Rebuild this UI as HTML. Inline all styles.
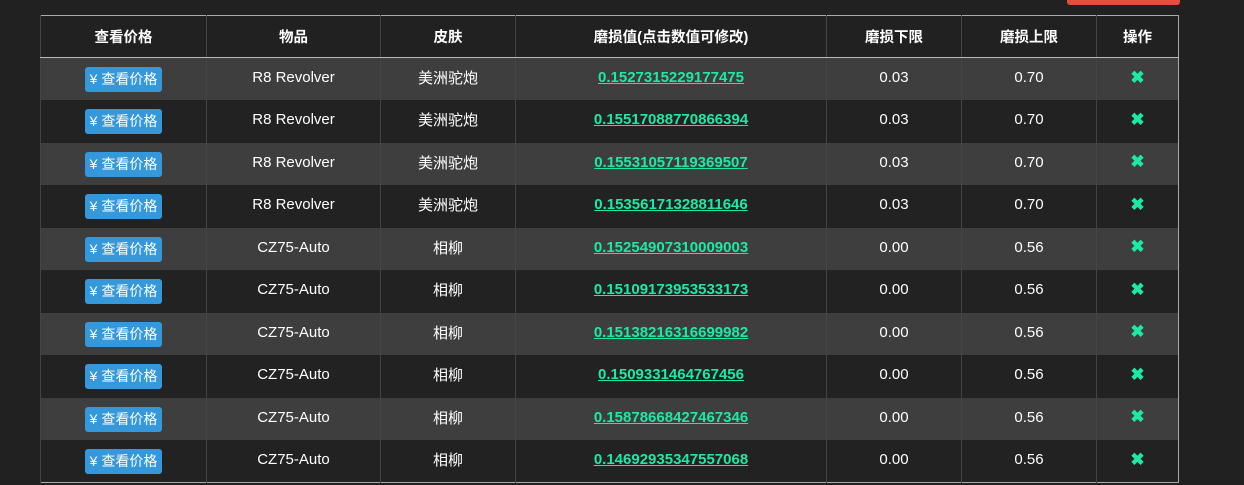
<!DOCTYPE html>
<html><head><meta charset="utf-8"><style>
html,body{margin:0;padding:0;background:#212121;width:1244px;height:485px;overflow:hidden;font-family:"Liberation Sans","Noto Sans CJK SC",sans-serif;color:#fff;}
.red{position:absolute;left:1067px;top:-4px;width:113px;height:9px;background:#e74c3c;border-radius:3px;}
table{position:absolute;left:40px;top:15px;border-collapse:collapse;border:1px solid #aaa;table-layout:fixed;width:1139px;}
td,th{border-left:1px solid #444;text-align:center;font-size:15px;padding:0;}
th{height:41px;font-weight:bold;border-bottom:1px solid #bbb;background:#212121;font-size:14.5px;}
td{height:42.5px;padding-bottom:3px;box-sizing:border-box;}
tr.o td{background:#3e3e3e;}
tr.e td{background:#222;}
.btn{display:inline-block;background:#3498db;color:#fff;border-radius:3px;width:77px;height:25px;line-height:25px;font-size:14px;position:relative;top:2px;}
a{color:#1de9a6;font-weight:bold;text-decoration:underline;font-size:15px;}
.x{color:#1de9a6;font-weight:bold;font-size:17px;}
</style></head><body>
<div class="red"></div>
<table>
<colgroup><col style="width:166px"><col style="width:174px"><col style="width:135px"><col style="width:311px"><col style="width:135px"><col style="width:135px"><col style="width:82px"></colgroup>
<tr><th>查看价格</th><th>物品</th><th>皮肤</th><th>磨损值(点击数值可修改)</th><th>磨损下限</th><th>磨损上限</th><th>操作</th></tr>
<tr class="o"><td><span class="btn">¥ 查看价格</span></td><td>R8 Revolver</td><td>美洲驼炮</td><td><a>0.1527315229177475</a></td><td>0.03</td><td>0.70</td><td class="x">✖</td></tr>
<tr class="e"><td><span class="btn">¥ 查看价格</span></td><td>R8 Revolver</td><td>美洲驼炮</td><td><a>0.15517088770866394</a></td><td>0.03</td><td>0.70</td><td class="x">✖</td></tr>
<tr class="o"><td><span class="btn">¥ 查看价格</span></td><td>R8 Revolver</td><td>美洲驼炮</td><td><a>0.15531057119369507</a></td><td>0.03</td><td>0.70</td><td class="x">✖</td></tr>
<tr class="e"><td><span class="btn">¥ 查看价格</span></td><td>R8 Revolver</td><td>美洲驼炮</td><td><a>0.15356171328811646</a></td><td>0.03</td><td>0.70</td><td class="x">✖</td></tr>
<tr class="o"><td><span class="btn">¥ 查看价格</span></td><td>CZ75-Auto</td><td>相柳</td><td><a>0.15254907310009003</a></td><td>0.00</td><td>0.56</td><td class="x">✖</td></tr>
<tr class="e"><td><span class="btn">¥ 查看价格</span></td><td>CZ75-Auto</td><td>相柳</td><td><a>0.15109173953533173</a></td><td>0.00</td><td>0.56</td><td class="x">✖</td></tr>
<tr class="o"><td><span class="btn">¥ 查看价格</span></td><td>CZ75-Auto</td><td>相柳</td><td><a>0.15138216316699982</a></td><td>0.00</td><td>0.56</td><td class="x">✖</td></tr>
<tr class="e"><td><span class="btn">¥ 查看价格</span></td><td>CZ75-Auto</td><td>相柳</td><td><a>0.1509331464767456</a></td><td>0.00</td><td>0.56</td><td class="x">✖</td></tr>
<tr class="o"><td><span class="btn">¥ 查看价格</span></td><td>CZ75-Auto</td><td>相柳</td><td><a>0.15878668427467346</a></td><td>0.00</td><td>0.56</td><td class="x">✖</td></tr>
<tr class="e"><td><span class="btn">¥ 查看价格</span></td><td>CZ75-Auto</td><td>相柳</td><td><a>0.14692935347557068</a></td><td>0.00</td><td>0.56</td><td class="x">✖</td></tr>
</table>
</body></html>
